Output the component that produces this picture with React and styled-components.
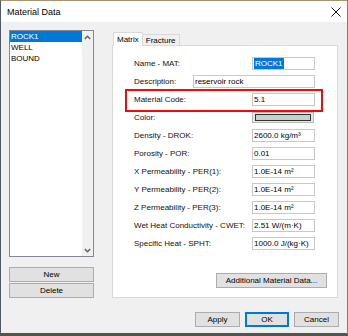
import React from "react";
import styled, { createGlobalStyle } from "styled-components";

const GlobalStyle = createGlobalStyle`
  html, body {
    margin: 0;
    padding: 0;
    background: #5b5446;
  }
  body {
    font-family: "Liberation Sans", Arial, sans-serif;
  }
`;

const materials = ["ROCK1", "WELL", "BOUND"];

const fields = [
  { label: "Name - MAT:", value: "ROCK1", selected: true },
  { label: "Description:", value: "reservoir rock", wide: true },
  { label: "Material Code:", value: "5.1", marked: true },
  { label: "Color:", color: "#c1d3c5" },
  { label: "Density - DROK:", value: "2600.0 kg/m³" },
  { label: "Porosity - POR:", value: "0.01" },
  { label: "X Permeability - PER(1):", value: "1.0E-14 m²" },
  { label: "Y Permeability - PER(2):", value: "1.0E-14 m²" },
  { label: "Z Permeability - PER(3):", value: "1.0E-14 m²" },
  { label: "Wet Heat Conductivity - CWET:", value: "2.51 W/(m·K)" },
  { label: "Specific Heat - SPHT:", value: "1000.0 J/(kg·K)" },
];

function Chevron({ down }) {
  return (
    <svg width="7" height="5" viewBox="0 0 7 5">
      <path
        d={down ? "M0.8 1 L3.5 3.8 L6.2 1" : "M0.8 4 L3.5 1.2 L6.2 4"}
        fill="none"
        stroke="#5a5a5a"
        strokeWidth="1.3"
      />
    </svg>
  );
}

export default function App() {
  return (
    <Window>
      <GlobalStyle />
      <TitleBar>
        <span>Material Data</span>
        <svg width="10" height="10" viewBox="0 0 10 10">
          <path d="M0.5 0.5 L9.5 9.5 M9.5 0.5 L0.5 9.5" stroke="#111" strokeWidth="1" />
        </svg>
      </TitleBar>

      <Body>
        <Main>
          <LeftColumn>
            <ListBox>
              <ListItems>
                {materials.map((m, i) => (
                  <ListItem key={m} selected={i === 0}>
                    {m}
                  </ListItem>
                ))}
              </ListItems>
              <ScrollBar>
                <Chevron />
                <Chevron down />
              </ScrollBar>
            </ListBox>
            <SideButtons>
              <Button>New</Button>
              <Button>Delete</Button>
            </SideButtons>
          </LeftColumn>

          <RightColumn>
            <TabStrip>
              <Tab active>Matrix</Tab>
              <Tab>Fracture</Tab>
            </TabStrip>
            <Panel>
              <Rows>
                {fields.map((f) => (
                  <Row key={f.label} marked={f.marked}>
                    <Label>{f.label}</Label>
                    {f.color ? (
                      <Swatch>
                        <SwatchFill color={f.color} />
                      </Swatch>
                    ) : (
                      <Field wide={f.wide}>
                        {f.selected ? <Selection>{f.value}</Selection> : f.value}
                      </Field>
                    )}
                  </Row>
                ))}
              </Rows>
              <MoreButton>Additional Material Data...</MoreButton>
            </Panel>
            <DialogButtons>
              <Button width="45px">Apply</Button>
              <Button width="44px" primary>
                OK
              </Button>
              <Button width="45px">Cancel</Button>
            </DialogButtons>
          </RightColumn>
        </Main>
      </Body>
    </Window>
  );
}

const Window = styled.div`
  width: 348px;
  height: 336px;
  box-sizing: border-box;
  border-top: 1px solid #a89470;
  border-left: 1px solid #4f5866;
  border-right: 1px solid #8c7b5c;
  border-bottom: 3px solid #57524a;
  background: #f0f0f0;
  display: flex;
  flex-direction: column;
  font-size: 8px;
  color: #000;
`;

const TitleBar = styled.div`
  height: 21px;
  flex: none;
  background: #fff;
  display: flex;
  align-items: center;
  justify-content: space-between;
  padding: 0 6px 0 6px;
  font-size: 9px;
`;

const Body = styled.div`
  flex: 1;
  padding: 8px 0 0 8px;
`;

const Main = styled.div`
  display: flex;
  gap: 18px;
`;

const LeftColumn = styled.div`
  width: 85px;
  display: flex;
  flex-direction: column;
`;

const ListBox = styled.div`
  height: 227px;
  box-sizing: border-box;
  border: 1px solid #828790;
  background: #fff;
  display: flex;
`;

const ListItems = styled.div`
  flex: 1;
  display: flex;
  flex-direction: column;
`;

const ListItem = styled.div`
  height: 11px;
  line-height: 11px;
  padding-left: 1px;
  background: ${(p) => (p.selected ? "#0078d7" : "transparent")};
  color: ${(p) => (p.selected ? "#fff" : "#000")};
`;

const ScrollBar = styled.div`
  width: 11px;
  background: #f0f0f0;
  display: flex;
  flex-direction: column;
  align-items: center;
  justify-content: space-between;
  padding: 4px 0 3px;
`;

const SideButtons = styled.div`
  margin-top: 10px;
  display: flex;
  flex-direction: column;
  gap: 1px;
`;

const Button = styled.div`
  width: ${(p) => p.width || "auto"};
  height: 15px;
  box-sizing: border-box;
  display: flex;
  align-items: center;
  justify-content: center;
  background: #e1e1e1;
  border: 1px solid ${(p) => (p.primary ? "#0078d7" : "#adadad")};
  box-shadow: ${(p) => (p.primary ? "inset 0 0 0 1px #0078d7" : "none")};
`;

const RightColumn = styled.div`
  width: 226px;
  display: flex;
  flex-direction: column;
`;

const TabStrip = styled.div`
  height: 16px;
  display: flex;
  align-items: flex-end;
  padding-left: 1px;
`;

const Tab = styled.div`
  position: relative;
  z-index: ${(p) => (p.active ? 1 : 0)};
  height: ${(p) => (p.active ? "14px" : "11px")};
  margin-bottom: ${(p) => (p.active ? "0" : "1px")};
  margin-left: ${(p) => (p.active ? "0" : "-1px")};
  box-sizing: border-box;
  padding: 0 3px;
  display: flex;
  align-items: center;
  border: 1px solid #d9d9d9;
  border-bottom: none;
  background: ${(p) => (p.active ? "#fff" : "#f0f0f0")};
`;

const Panel = styled.div`
  margin-top: -1px;
  height: 253px;
  box-sizing: border-box;
  border: 1px solid #d9d9d9;
  background: #fff;
  display: flex;
  flex-direction: column;
  padding: 11px 10px 9px 21px;
`;

const Rows = styled.div`
  display: flex;
  flex-direction: column;
  gap: 5px;
  width: 181px;
`;

const Row = styled.div`
  position: relative;
  height: 13px;
  display: flex;
  align-items: center;

  &::after {
    content: "";
    display: ${(p) => (p.marked ? "block" : "none")};
    position: absolute;
    top: -4px;
    bottom: -6px;
    left: -9px;
    right: -8px;
    border: 2px solid #f20a0a;
  }
`;

const Label = styled.div`
  flex: 1;
  white-space: nowrap;
  color: #111;
`;

const Field = styled.div`
  width: ${(p) => (p.wide ? "122px" : "63px")};
  height: 13px;
  box-sizing: border-box;
  border: 1px solid #c8c8c8;
  background: #fff;
  padding-left: 1px;
  display: flex;
  align-items: center;
  white-space: nowrap;
`;

const Selection = styled.span`
  background: #0078d7;
  color: #fff;
  padding: 0 1px;
  line-height: 11px;
`;

const Swatch = styled.div`
  width: 62px;
  height: 11px;
  box-sizing: border-box;
  border: 1px solid #b8b8b8;
  background: #e6e6e6;
  padding: 1px 2px;
  margin-right: 1px;
`;

const SwatchFill = styled.div`
  height: 100%;
  box-sizing: border-box;
  border: 1px solid #333;
  background: ${(p) => p.color};
`;

const MoreButton = styled(Button)`
  margin-top: auto;
  align-self: flex-end;
  width: 111px;
`;

const DialogButtons = styled.div`
  margin-top: 14px;
  margin-right: -1px;
  display: flex;
  justify-content: flex-end;
  gap: 5px;
`;
